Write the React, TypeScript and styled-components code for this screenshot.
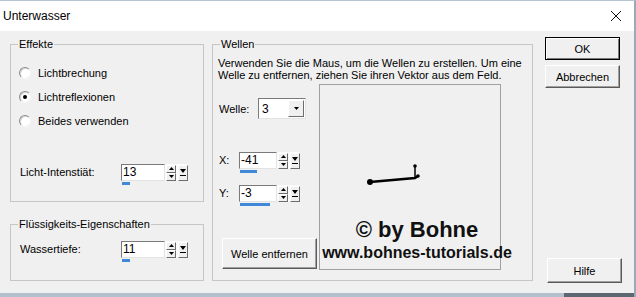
import React from 'react';
import styled, { createGlobalStyle } from 'styled-components';

const Global = createGlobalStyle`
  html, body { margin: 0; padding: 0; background: #f0f0f0; }
  body {
    font-family: "Liberation Sans", Arial, sans-serif;
    font-size: 11px;
    color: #000;
  }
  * { box-sizing: border-box; }
`;

const Window = styled.div`
  width: 636px;
  height: 297px;
  display: flex;
  flex-direction: column;
  background: #f0f0f0;
  border-right: 2px solid #9aaabb;
  border-top: 1px solid #b7c4d2;
  overflow: hidden;
`;

const TitleBar = styled.div`
  height: 30px;
  background: #fff;
  display: flex;
  align-items: center;
  justify-content: space-between;
  padding: 0 12px 0 3px;
  font-size: 12px;
  flex-shrink: 0;
`;

const CloseGlyph = styled.svg`
  width: 12px;
  height: 12px;
`;

const Body = styled.div`
  flex: 1;
  display: flex;
  padding: 7px 0 0 10px;
`;

const LeftCol = styled.div`
  width: 194px;
  display: flex;
  flex-direction: column;
  gap: 16px;
`;

const Group = styled.fieldset<{ $h: number; $w?: number }>`
  margin: 0;
  padding: 0;
  border: 1px solid #c6c6c6;
  height: ${(p) => p.$h}px;
  width: ${(p) => (p.$w ? `${p.$w}px` : 'auto')};
  min-width: 0;
`;

const Legend = styled.legend`
  margin-left: 7px;
  padding: 0 1px;
  font-size: 11px;
  line-height: 13px;
`;

const GroupContent = styled.div<{ $pt: number; $pl: number }>`
  padding: ${(p) => p.$pt}px 0 0 ${(p) => p.$pl}px;
  display: flex;
  flex-direction: column;
`;

const RadioRow = styled.div`
  height: 24px;
  display: flex;
  align-items: center;
  gap: 7px;
`;

const RadioCircle = styled.span<{ $on?: boolean }>`
  width: 12px;
  height: 12px;
  border-radius: 50%;
  background: #fff;
  border: 1px solid;
  border-color: #8d8d8d #f4f4f4 #f4f4f4 #8d8d8d;
  box-shadow: inset 1px 1px 0 #d8d8d8;
  display: flex;
  align-items: center;
  justify-content: center;
  &::after {
    content: '';
    width: 4px;
    height: 4px;
    border-radius: 50%;
    background: ${(p) => (p.$on ? '#000' : 'transparent')};
  }
`;

const FieldRow = styled.div<{ $mt: number; $lw: number }>`
  margin-top: ${(p) => p.$mt}px;
  display: flex;
  align-items: flex-start;
  & > span:first-child {
    width: ${(p) => p.$lw}px;
    line-height: 17px;
    padding-left: 1px;
  }
`;

const SpinWrap = styled.div`
  display: flex;
  flex-direction: column;
  gap: 1px;
`;

const SpinLine = styled.div`
  display: flex;
  align-items: center;
  background: #fbfbfb;
`;

const Edit = styled.div<{ $w: number }>`
  width: ${(p) => p.$w}px;
  height: 17px;
  background: #fff;
  border: 1px solid;
  border-color: #7a7a7a #e3e3e3 #e3e3e3 #7a7a7a;
  padding-left: 1px;
  line-height: 15px;
  font-size: 12px;
`;

const SpinPair = styled.div`
  display: flex;
  flex-direction: column;
  margin-left: 1px;
`;

const SmallBtn = styled.div<{ $h: number }>`
  width: 10px;
  height: ${(p) => p.$h}px;
  background: #f0f0f0;
  border: 1px solid;
  border-color: #fff #6d6d6d #6d6d6d #fff;
  display: flex;
  align-items: center;
  justify-content: center;
`;

const PopBtn = styled(SmallBtn)`
  margin-left: 2px;
`;

const ValueBar = styled.div`
  height: 3px;
  background: #3f8ad8;
  margin-left: 1px;
`;

const Wellen = styled(Group)`
  margin-left: 8px;
`;

const Description = styled.div`
  line-height: 12px;
  padding-left: 0;
  margin-top: -1px;
`;

const WellenRow = styled.div`
  display: flex;
  margin-top: 3px;
`;

const WellenLeft = styled.div`
  width: 101px;
  height: 186px;
  display: flex;
  flex-direction: column;
`;

const ComboRow = styled.div`
  margin-top: 14px;
  display: flex;
  align-items: center;
  & > span { width: 40px; padding-left: 1px; }
`;

const Combo = styled.div`
  width: 48px;
  height: 21px;
  background: #fff;
  border: 1px solid;
  border-color: #7a7a7a #e3e3e3 #e3e3e3 #7a7a7a;
  display: flex;
  align-items: center;
  justify-content: space-between;
  padding: 1px;
  font-size: 12px;
  & > span { padding-left: 2px; }
`;

const ComboBtn = styled.div`
  width: 16px;
  height: 17px;
  background: #f0f0f0;
  border: 1px solid;
  border-color: #fff #6d6d6d #6d6d6d #fff;
  display: flex;
  align-items: center;
  justify-content: center;
`;

const PushButton = styled.div<{ $w: number; $h: number; $def?: boolean }>`
  width: ${(p) => p.$w}px;
  height: ${(p) => p.$h}px;
  background: #f0f0f0;
  display: flex;
  align-items: center;
  justify-content: center;
  font-size: 11px;
  border: 1px solid;
  border-color: ${(p) => (p.$def ? '#000' : '#fff #5a5a5a #5a5a5a #fff')};
  box-shadow: ${(p) =>
    p.$def
      ? 'inset 1px 1px 0 #fff, inset -1px -1px 0 #7a7a7a'
      : 'inset -1px -1px 0 #a0a0a0'};
`;

const RemoveBtn = styled(PushButton)`
  margin: auto 0 1px 4px;
`;

const Canvas = styled.div`
  width: 182px;
  height: 186px;
  border: 1px solid #a0a0a0;
  background: #f0f0f0;
  position: relative;
`;

const WaveSvg = styled.svg`
  position: absolute;
  left: 0;
  top: 0;
`;

const Watermark = styled.div`
  position: absolute;
  left: 0;
  top: 131px;
  width: 194px;
  font-family: "Liberation Sans", Arial, sans-serif;
  font-weight: bold;
  color: #111;
  display: flex;
  flex-direction: column;
  align-items: center;
  white-space: nowrap;
  & > div:first-child { font-size: 22px; line-height: 28px; }
  & > div:last-child { font-size: 16px; line-height: 18px; }
`;

const RightCol = styled.div`
  margin-left: 12px;
  margin-top: -1px;
  width: 76px;
  display: flex;
  flex-direction: column;
  gap: 5px;
  padding-bottom: 10px;
`;

const HelpBtn = styled(PushButton)`
  margin-top: auto;
  margin-left: 2px;
`;

const BottomStrip = styled.div`
  height: 4px;
  flex-shrink: 0;
  background: linear-gradient(90deg, #b4c0cd 0%, #b4c0cd 89%, #5d6772 89%, #5d6772 100%);
`;

const Up = () => (
  <svg width="5" height="3" viewBox="0 0 5 3">
    <path d="M2.5 0 L5 3 L0 3 Z" fill="#000" />
  </svg>
);
const Down = () => (
  <svg width="5" height="3" viewBox="0 0 5 3">
    <path d="M0 0 L5 0 L2.5 3 Z" fill="#000" />
  </svg>
);
const DownBar = () => (
  <svg width="6" height="8" viewBox="0 0 6 8">
    <path d="M0 0 L6 0 L3 4 Z" fill="#000" />
    <rect x="0" y="6" width="6" height="1" fill="#000" />
  </svg>
);

const Spin: React.FC<{ value: string; bar: number; w?: number }> = ({ value, bar, w = 44 }) => (
  <SpinWrap>
    <SpinLine>
      <Edit $w={w}>{value}</Edit>
      <SpinPair>
        <SmallBtn $h={8}><Up /></SmallBtn>
        <SmallBtn $h={8}><Down /></SmallBtn>
      </SpinPair>
      <PopBtn $h={16}><DownBar /></PopBtn>
    </SpinLine>
    <ValueBar style={{ width: bar }} />
  </SpinWrap>
);

export default function App() {
  return (
    <>
      <Global />
      <Window>
        <TitleBar>
          <span>Unterwasser</span>
          <CloseGlyph viewBox="0 0 12 12">
            <path d="M1 1 L11 11 M11 1 L1 11" stroke="#111" strokeWidth="1" />
          </CloseGlyph>
        </TitleBar>
        <Body>
          <LeftCol>
            <Group $h={164}>
              <Legend>Effekte</Legend>
              <GroupContent $pt={10} $pl={8}>
                <RadioRow><RadioCircle />Lichtbrechung</RadioRow>
                <RadioRow><RadioCircle $on />Lichtreflexionen</RadioRow>
                <RadioRow><RadioCircle />Beides verwenden</RadioRow>
                <FieldRow $mt={31} $lw={102}>
                  <span>Licht-Intenstiät:</span>
                  <Spin value="13" bar={8} />
                </FieldRow>
              </GroupContent>
            </Group>
            <Group $h={63}>
              <Legend>Flüssigkeits-Eigenschaften</Legend>
              <GroupContent $pt={10} $pl={8}>
                <FieldRow $mt={0} $lw={102}>
                  <span>Wassertiefe:</span>
                  <Spin value="11" bar={8} />
                </FieldRow>
              </GroupContent>
            </Group>
          </LeftCol>
          <Wellen $h={243} $w={321}>
            <Legend>Wellen</Legend>
            <GroupContent $pt={7} $pl={5}>
              <Description>
                Verwenden Sie die Maus, um die Wellen zu erstellen. Um eine
                <br />
                Welle zu entfernen, ziehen Sie ihren Vektor aus dem Feld.
              </Description>
              <WellenRow>
                <WellenLeft>
                  <ComboRow>
                    <span>Welle:</span>
                    <Combo>
                      <span>3</span>
                      <ComboBtn><Down /></ComboBtn>
                    </Combo>
                  </ComboRow>
                  <FieldRow $mt={33} $lw={21}>
                    <span>X:</span>
                    <Spin value="-41" bar={17} w={38} />
                  </FieldRow>
                  <FieldRow $mt={12} $lw={21}>
                    <span>Y:</span>
                    <Spin value="-3" bar={30} w={38} />
                  </FieldRow>
                  <RemoveBtn $w={95} $h={31}>Welle entfernen</RemoveBtn>
                </WellenLeft>
                <Canvas>
                  <WaveSvg width="182" height="186" viewBox="0 0 182 186">
                    <path d="M50 97 L95 93 L98 91" stroke="#000" strokeWidth="2.5" fill="none" />
                    <path d="M95 93 L95 81" stroke="#000" strokeWidth="1.5" fill="none" />
                    <circle cx="50" cy="97" r="3" fill="#000" />
                    <circle cx="95" cy="81" r="1.8" fill="#000" />
                    <circle cx="98" cy="91" r="1.8" fill="#000" />
                  </WaveSvg>
                  <Watermark>
                    <div>© by Bohne</div>
                    <div>www.bohnes-tutorials.de</div>
                  </Watermark>
                </Canvas>
              </WellenRow>
            </GroupContent>
          </Wellen>
          <RightCol>
            <PushButton $w={75} $h={23} $def>OK</PushButton>
            <PushButton $w={75} $h={23}>Abbrechen</PushButton>
            <HelpBtn $w={75} $h={25}>Hilfe</HelpBtn>
          </RightCol>
        </Body>
        <BottomStrip />
      </Window>
    </>
  );
}
